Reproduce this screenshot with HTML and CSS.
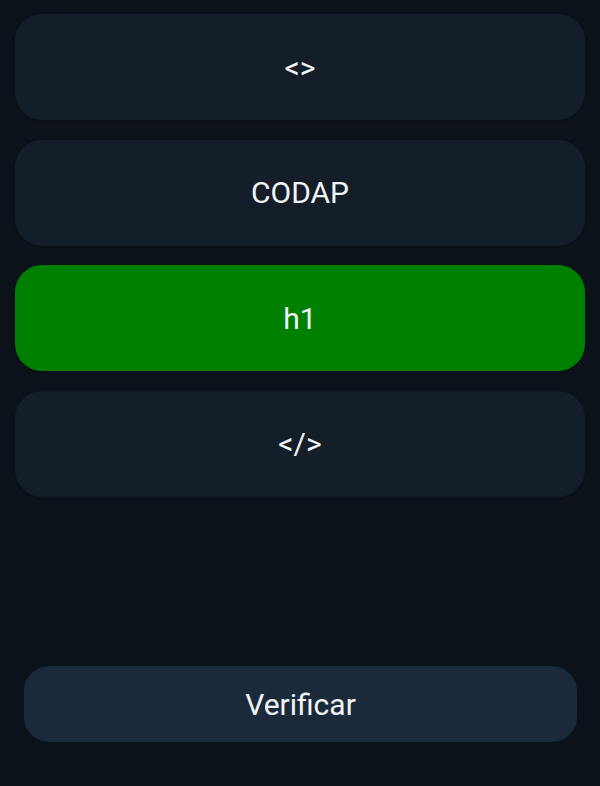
FILE: index.html
```html
<!DOCTYPE html>
<html lang="es">
<head>
<meta charset="utf-8">
<title>Quiz</title>
<link rel="stylesheet" href="styles.css">
</head>
<body>
<main class="screen">
  <section class="options">
    <div class="option">&lt;&gt;</div>
    <div class="option">CODAP</div>
    <div class="option option--selected">h1</div>
    <div class="option">&lt;/&gt;</div>
  </section>
  <button class="verify">Verificar</button>
</main>
</body>
</html>
```

FILE: styles.css
```css
html, body {
  margin: 0;
  padding: 0;
  background: #0c121a;
}

body {
  font-family: Roboto, "Noto Sans", "Liberation Sans", sans-serif;
  color: #f2f4f6;
}

.screen {
  box-sizing: border-box;
  height: 786px;
  display: flex;
  flex-direction: column;
  padding: 14px 15px 44px;
}

.options {
  display: flex;
  flex-direction: column;
  gap: 19.5px;
}

.option {
  height: 106px;
  border-radius: 27px;
  background: #141e28;
  display: flex;
  align-items: center;
  justify-content: center;
  font-size: 30px;
  box-shadow: 0 1px 3px rgba(0, 0, 0, 0.25);
}

.option--selected {
  background: #008000;
}

.verify {
  margin: auto 8px 0 9px;
  height: 76px;
  border: none;
  border-radius: 25px;
  background: #1b2a3a;
  color: #f2f4f6;
  font-family: Roboto, "Noto Sans", "Liberation Sans", sans-serif;
  font-size: 30px;
  padding: 0;
}
```
